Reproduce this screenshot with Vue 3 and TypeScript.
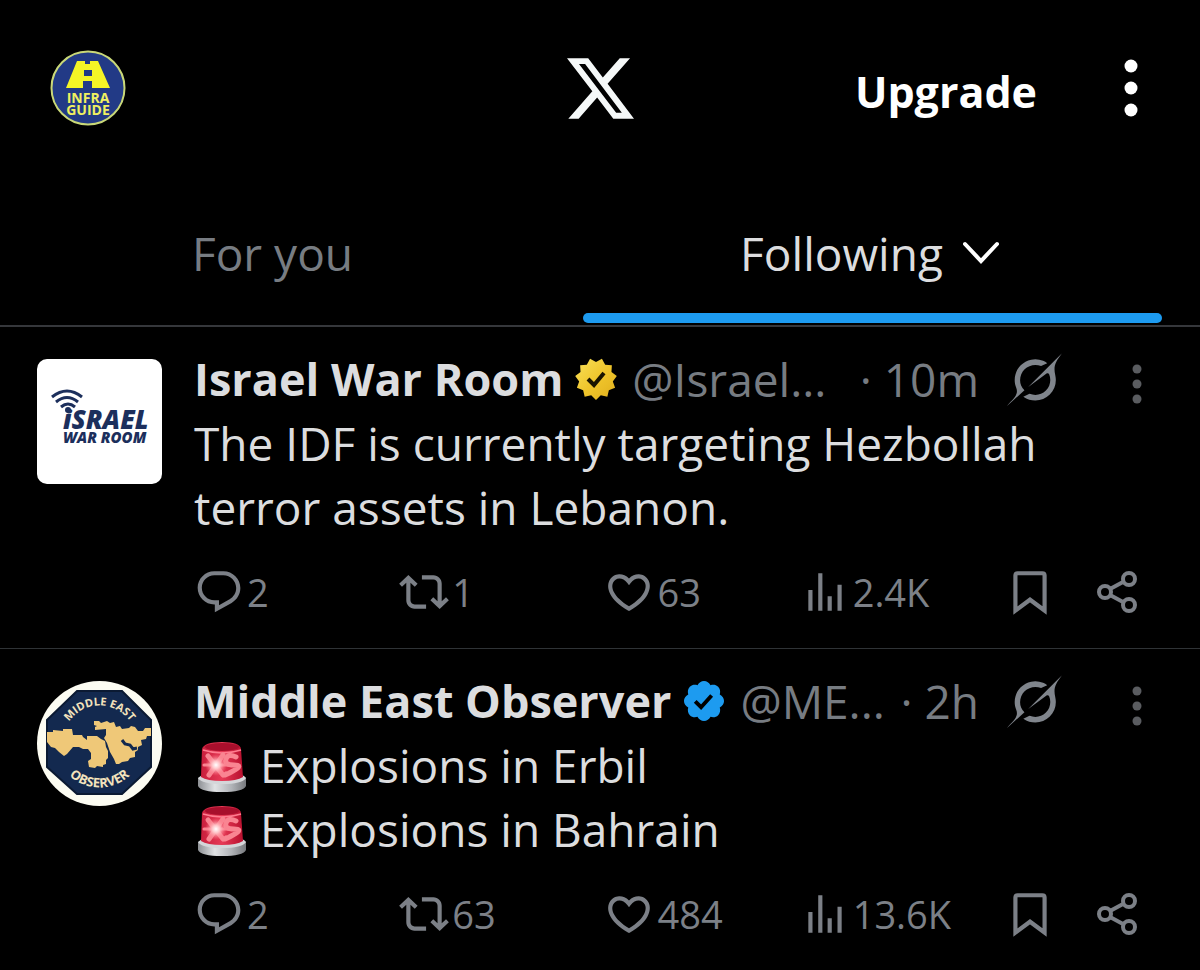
<script setup lang="ts">
import { ref } from 'vue'

interface Post {
  id: number
  name: string
  badge: 'gold' | 'blue'
  logo: 'warroom' | 'observer'
  handle: string
  time: string
  lines: { siren: boolean; text: string }[]
  replies: string
  reposts: string
  likes: string
  views: string
}

const active = ref('following')

const posts: Post[] = [
  {
    id: 1,
    name: 'Israel War Room',
    badge: 'gold',
    logo: 'warroom',
    handle: '@Israel...',
    time: '10m',
    lines: [{ siren: false, text: 'The IDF is currently targeting Hezbollah terror assets in Lebanon.' }],
    replies: '2',
    reposts: '1',
    likes: '63',
    views: '2.4K',
  },
  {
    id: 2,
    name: 'Middle East Observer',
    badge: 'blue',
    logo: 'observer',
    handle: '@ME...',
    time: '2h',
    lines: [
      { siren: true, text: 'Explosions in Erbil' },
      { siren: true, text: 'Explosions in Bahrain' },
    ],
    replies: '2',
    reposts: '63',
    likes: '484',
    views: '13.6K',
  },
]

const icons = {
  reply:
    'M1.751 10c0-4.42 3.584-8 8.005-8h4.366c4.49 0 8.129 3.64 8.129 8.13 0 2.96-1.607 5.68-4.196 7.11l-8.054 4.46v-3.69h-.067c-4.49.1-8.183-3.51-8.183-8.01zm8.005-6c-3.317 0-6.005 2.69-6.005 6 0 3.37 2.77 6.08 6.138 6.01l.351-.01h1.761v2.3l5.087-2.81c1.951-1.08 3.163-3.13 3.163-5.36 0-3.39-2.744-6.13-6.129-6.13H9.756z',
  repost:
    'M4.5 3.88l4.432 4.14-1.364 1.46L5.5 7.55V16c0 1.1.896 2 2 2H13v2H7.5c-2.209 0-4-1.79-4-4V7.55L1.432 9.48.068 8.02 4.5 3.88zM16.5 6H11V4h5.5c2.209 0 4 1.79 4 4v8.45l2.068-1.93 1.364 1.46-4.432 4.14-4.432-4.14 1.364-1.46 2.068 1.93V8c0-1.1-.896-2-2-2z',
  like: 'M16.697 5.5c-1.222-.06-2.679.51-3.89 2.16l-.805 1.09-.806-1.09C9.984 6.01 8.526 5.44 7.304 5.5c-1.243.07-2.349.78-2.91 1.91-.552 1.12-.633 2.78.479 4.82 1.074 1.97 3.257 4.27 7.129 6.61 3.87-2.34 6.052-4.64 7.126-6.61 1.111-2.04 1.03-3.7.477-4.82-.561-1.13-1.666-1.84-2.908-1.91zm4.187 7.69c-1.351 2.48-4.001 5.12-8.379 7.67l-.503.3-.504-.3c-4.379-2.55-7.029-5.19-8.382-7.67-1.36-2.5-1.41-4.86-.514-6.67.887-1.79 2.647-2.91 4.601-3.01 1.651-.09 3.368.56 4.798 2.01 1.429-1.45 3.146-2.1 4.796-2.01 1.954.1 3.714 1.22 4.601 3.01.896 1.81.846 4.17-.514 6.67z',
  views: 'M8.75 21V3h2v18h-2zM18 21V8.5h2V21h-2zM4 21V11h2v10H4zm9.25 0v-7h2v7h-2z',
  bookmark: 'M5 20.9V4.1C5 3.4 5.5 3 6.1 3h11.8c.6 0 1.1.4 1.1 1.1v16.8l-7-5.2z',
  grok: 'M9.27 15.29l7.978-5.897c.391-.29.95-.177 1.137.272.98 2.369.542 5.215-1.41 7.169-1.951 1.954-4.667 2.382-7.149 1.406l-2.711 1.257c3.889 2.661 8.611 2.003 11.562-.953 2.341-2.344 3.066-5.539 2.388-8.42l.006.007c-.983-4.232.242-5.924 2.75-9.383.06-.082.12-.164.179-.248l-3.301 3.305v-.01L9.267 15.292M7.623 16.723c-2.792-2.67-2.31-6.801.071-9.184 1.761-1.763 4.647-2.483 7.166-1.425l2.705-1.25a7.808 7.808 0 00-1.829-1A8.975 8.975 0 005.984 5.83c-2.533 2.536-3.33 6.436-1.962 9.764 1.022 2.487-.653 4.246-2.34 6.022-.599.63-1.199 1.259-1.682 1.925l7.62-6.815',
  blueBadge:
    'M22.25 12c0-1.43-.88-2.67-2.19-3.34.46-1.39.2-2.9-.81-3.91s-2.52-1.27-3.91-.81c-.66-1.31-1.91-2.19-3.34-2.19s-2.67.88-3.33 2.19c-1.4-.46-2.91-.2-3.92.81s-1.26 2.52-.8 3.91c-1.31.67-2.2 1.91-2.2 3.34s.89 2.67 2.2 3.34c-.46 1.39-.21 2.9.8 3.91s2.52 1.26 3.91.81c.67 1.31 1.91 2.19 3.34 2.19s2.68-.88 3.34-2.19c1.39.45 2.9.2 3.91-.81s1.27-2.52.81-3.91c1.31-.67 2.19-1.91 2.19-3.34z',
}

// Eleven-pointed outline of the gold badge: alternating outer and inner radii, one tip straight down.
const starPoints = Array.from({ length: 22 }, (_, i) => {
  const r = i % 2 === 0 ? 21 : 17
  const a = (i * Math.PI) / 11 + Math.PI / 2
  return `${(21 + r * Math.cos(a)).toFixed(2)},${(21 + r * Math.sin(a)).toFixed(2)}`
}).join(' ')
</script>

<template>
  <div class="app">
    <header class="top">
      <button class="profile" aria-label="Profile">
        <svg viewBox="0 0 76 76">
          <circle cx="38" cy="38" r="36.5" fill="#223a86" stroke="#c9d878" stroke-width="2" />
          <path fill-rule="evenodd" d="M27 11h8v3h5v-3h8l12 27H42v-7h-9v7H16zM34 20v6h8v-6z" fill="#f5f526" />
          <text text-anchor="middle" class="infra">
            <tspan x="38" y="53">INFRA</tspan>
            <tspan x="38" y="65">GUIDE</tspan>
          </text>
        </svg>
      </button>
      <svg class="x-logo" viewBox="1.254 2.25 21.574 19.5" role="img" aria-label="X">
        <path
          fill="#f5f8f8"
          d="M18.244 2.25h3.308l-7.227 8.26 8.502 11.24H16.17l-5.214-6.817L4.99 21.75H1.68l7.73-8.835L1.254 2.25H8.08l4.713 6.231zm-1.161 17.52h1.833L7.084 4.126H5.117z"
        />
      </svg>
      <div class="top-right">
        <button class="upgrade">Upgrade</button>
        <button class="menu" aria-label="Menu">
          <svg viewBox="0 0 16 60">
            <circle cx="8" cy="8" r="6.5" />
            <circle cx="8" cy="30" r="6.5" />
            <circle cx="8" cy="52" r="6.5" />
          </svg>
        </button>
      </div>
    </header>

    <nav class="tabs">
      <button class="tab" :class="{ active: active === 'foryou' }" @click="active = 'foryou'">
        <span class="tab-label">For you</span>
        <span class="bar"></span>
      </button>
      <button class="tab" :class="{ active: active === 'following' }" @click="active = 'following'">
        <span class="tab-label with-menu">
          Following
          <svg class="chevron" viewBox="0 0 36 24">
            <path d="M2 3l16 17L34 3" fill="none" stroke="#fff" stroke-width="4" stroke-linecap="round" />
          </svg>
        </span>
        <span class="bar"></span>
      </button>
    </nav>

    <main>
      <article v-for="p in posts" :key="p.id" class="post">
        <a href="#" class="avatar" :aria-label="p.name">
          <svg v-if="p.logo === 'warroom'" viewBox="0 0 125 125">
            <rect width="125" height="125" rx="10" fill="#fff" />
            <g fill="none" stroke="#1c2f5c" stroke-width="3">
              <path d="M15 38q15-12 30 0" />
              <path d="M19 43q11-9 22 0" />
              <path d="M24 48q7-6 14 0" />
            </g>
            <circle cx="31" cy="51" r="3" fill="#1c2f5c" />
            <text class="wr-big">
              <tspan x="26" y="70">iSRAEL</tspan>
              <tspan x="26" y="84" class="wr-small">WAR ROOM</tspan>
            </text>
          </svg>
          <svg v-else viewBox="0 0 125 125">
            <circle cx="62.5" cy="62.5" r="62.5" fill="#fcfcf2" />
            <path d="M40 10h45l29 29v47l-29 27H40L10 86V39z" fill="#13294f" stroke="#0b1a33" stroke-width="2" />
            <path
              fill="#efc878"
              d="M10 51L16 51L16 49L26 50L26 48L35 48L36 54L45 54L46 56L50 59L50 55L60 55L64 58L68 60L69 66L71 70L71 77L69 79L69 83L66 84L66 86L60 85L58 87L52 86L51 80L54 78L54 72L51 68L46 68L42 66L36 66L30 73L27 75L22 71L18 67L14 66L10 61Z"
            />
            <path
              fill="#efc878"
              d="M57 40L62 40L64 42L70 40L73 42L77 41L79 46L83 45L85 48L92 47L94 45L98 46L101 50L106 50L108 47L114 47L114 55L110 55L109 58L104 59L105 64L101 66L101 69L98 71L98 76L93 77L91 80L85 81L82 83L79 83L77 78L73 71L70 62L67 57L69 54L69 48L58 49L58 46L60 45L57 44Z"
            />
            <path d="M85 59l3 4 5 1 3 4 4-1" fill="none" stroke="#13294f" stroke-width="3" />
            <path id="arc-top" d="M25.5 61.5a37 37 0 0 1 74 0" fill="none" />
            <path id="arc-bottom" d="M17.5 61.5a45 45 0 0 0 90 0" fill="none" />
            <text class="ring"><textPath href="#arc-top" startOffset="50%" text-anchor="middle">MIDDLE EAST</textPath></text>
            <text class="ring low"><textPath href="#arc-bottom" startOffset="50%" text-anchor="middle">OBSERVER</textPath></text>
          </svg>
        </a>

        <div class="content">
          <div class="meta">
            <a href="#" class="name">{{ p.name }}</a>
            <svg v-if="p.badge === 'gold'" class="badge" viewBox="0 0 42 42" role="img" aria-label="Verified organization">
              <defs>
                <linearGradient id="gold" x1="0" y1="0" x2="1" y2="1">
                  <stop offset="0" stop-color="#f7e05a" />
                  <stop offset="0.5" stop-color="#f0c62c" />
                  <stop offset="1" stop-color="#e0ae1c" />
                </linearGradient>
              </defs>
              <polygon :points="starPoints" fill="url(#gold)" />
              <path d="M13 21l6 6 10-12" fill="none" stroke="#1a1400" stroke-width="4" />
            </svg>
            <svg v-else class="badge" viewBox="1.25 1.25 21.5 21.5" role="img" aria-label="Verified account">
              <path :d="icons.blueBadge" fill="#1d9bf0" />
              <path d="M7.5 12.2l3 3 5.4-6" fill="none" stroke="#000" stroke-width="2" />
            </svg>
            <span class="handle">{{ p.handle }}</span>
            <span class="time">· {{ p.time }}</span>
            <button class="grok" aria-label="Explain this post">
              <svg viewBox="0 0 24 24"><path :d="icons.grok" /></svg>
            </button>
            <button class="more" aria-label="More">
              <svg viewBox="0 0 10 40">
                <circle cx="5" cy="5" r="4.5" />
                <circle cx="5" cy="20" r="4.5" />
                <circle cx="5" cy="35" r="4.5" />
              </svg>
            </button>
          </div>

          <p v-for="line in p.lines" :key="line.text" class="text">
            <svg v-if="line.siren" class="siren" viewBox="0 0 48 50" role="img" aria-label="Siren">
              <defs>
                <linearGradient id="dome" x1="0" x2="1">
                  <stop offset="0" stop-color="#c81e3c" />
                  <stop offset="0.5" stop-color="#e63a56" />
                  <stop offset="1" stop-color="#b8102e" />
                </linearGradient>
                <linearGradient id="base" x1="0" x2="1">
                  <stop offset="0" stop-color="#8d9094" />
                  <stop offset="0.35" stop-color="#e0e2e4" />
                  <stop offset="0.7" stop-color="#b0b3b7" />
                  <stop offset="1" stop-color="#77797d" />
                </linearGradient>
                <radialGradient id="glow">
                  <stop offset="0" stop-color="#fff" />
                  <stop offset="0.35" stop-color="#ffc4c8" />
                  <stop offset="1" stop-color="#ff6a7c" stop-opacity="0" />
                </radialGradient>
              </defs>
              <path d="M0 36q24-9 48 0v8q-3 6-24 6T0 44z" fill="url(#base)" />
              <path d="M0 36q3-3 6-3h36q4 0 6 3-4 6-24 6T0 36z" fill="#d4d6d9" />
              <path d="M4 7q2-7 20-7t19 7l2 28q-6 4-21 4T3 35z" fill="url(#dome)" />
              <ellipse cx="24" cy="5" rx="17" ry="4" fill="#a80f2c" />
              <path d="M5 8q19 6 38 0" fill="none" stroke="#ff7d90" stroke-width="1.5" />
              <g fill="none" stroke="#f98592" stroke-width="5" stroke-linecap="round">
                <path d="M10 14l15 19M25 13L11 33" />
                <path d="M38 15q-8-4-10 2t8 6-1 6-7 3" />
                <path d="M6 23h32" stroke-width="3" />
              </g>
              <circle cx="18" cy="23" r="11" fill="url(#glow)" />
            </svg>
            {{ line.text }}
          </p>

          <div class="actions">
            <button aria-label="Reply"><svg viewBox="0 0 24 24"><path :d="icons.reply" /></svg>{{ p.replies }}</button>
            <button aria-label="Repost"><svg viewBox="0 0 24 24"><path :d="icons.repost" /></svg>{{ p.reposts }}</button>
            <button aria-label="Like"><svg viewBox="0 0 24 24"><path :d="icons.like" /></svg>{{ p.likes }}</button>
            <button aria-label="Views"><svg viewBox="0 0 24 24"><path :d="icons.views" /></svg>{{ p.views }}</button>
            <button aria-label="Bookmark">
              <svg viewBox="0 0 24 24" class="line"><path :d="icons.bookmark" /></svg>
            </button>
            <button aria-label="Share">
              <svg viewBox="0 0 42 50" class="line share">
                <circle cx="33" cy="12" r="6" />
                <circle cx="9" cy="25" r="6" />
                <circle cx="33" cy="38" r="6" />
                <path d="M14 22l13-7M14 28l13 7" />
              </svg>
            </button>
          </div>
        </div>
      </article>
    </main>
  </div>
</template>

<style>
body {
  margin: 0;
  background: #000;
}
</style>

<style scoped>
.app {
  background: #000;
  color: #dcdddf;
  font-family: 'Open Sans', 'Noto Sans', sans-serif;
  font-size: 46px;
  line-height: 64px;
}
svg {
  display: block;
  flex: none;
}
button {
  margin: 0;
  padding: 0;
  border: 0;
  background: none;
  color: inherit;
  font: inherit;
  cursor: pointer;
}
a {
  color: inherit;
  text-decoration: none;
}
.top {
  display: grid;
  grid-template-columns: 1fr auto 1fr;
  align-items: center;
  padding: 50px 50px 69px;
}
.profile {
  justify-self: start;
}
.profile svg {
  width: 76px;
  height: 76px;
}
.infra {
  font-size: 14px;
  font-weight: 700;
  fill: #f0f060;
}
.x-logo {
  width: 67px;
  height: 61px;
}
.top-right {
  display: flex;
  align-items: center;
  justify-content: flex-end;
  gap: 86px;
  padding-right: 11px;
}
.upgrade {
  padding-top: 8px;
  color: #fff;
  font-weight: 700;
  font-size: 43px;
}
.menu svg {
  width: 16px;
  height: 60px;
  fill: #fff;
}
.tabs {
  display: grid;
  grid-template-columns: 545fr 579fr;
  gap: 38px;
  padding: 0 38px 2px 0;
  border-bottom: 2px solid #35373b;
}
.tab {
  display: flex;
  flex-direction: column;
  color: #777c82;
}
.tab.active {
  color: #dcdddf;
}
.tab-label {
  display: flex;
  align-items: center;
  align-self: center;
  gap: 20px;
  padding: 26px 0 28px;
}
.with-menu {
  padding-right: 6px;
}
.chevron {
  width: 36px;
  height: 24px;
}
.bar {
  align-self: stretch;
  height: 10px;
  border-radius: 5px;
}
.tab.active .bar {
  background: #1d9bf0;
}
.post {
  display: flex;
  gap: 32px;
  padding: 20px 58px 31px 37px;
  border-bottom: 1px solid #2f3336;
}
.avatar {
  flex: none;
  padding-top: 12px;
}
.avatar svg {
  width: 125px;
  height: 125px;
}
.wr-big,
.wr-small {
  font-weight: 800;
  font-style: italic;
  fill: #1c2f5c;
}
.wr-big {
  font-size: 26px;
}
.wr-small {
  font-size: 15px;
}
.ring {
  font-size: 11px;
  font-weight: 700;
  fill: #f3e3bd;
}
.ring.low {
  font-size: 13px;
}
.content {
  flex: 1;
  min-width: 0;
}
.meta {
  display: flex;
  align-items: center;
  height: 64px;
  white-space: nowrap;
}
.name {
  font-weight: 700;
  font-size: 45px;
}
.badge {
  width: 42px;
  height: 42px;
  margin: 0 15px 0 12px;
}
.handle,
.time {
  color: #777c82;
}
.time {
  margin-left: auto;
}
.grok {
  margin: 0 70px 0 28px;
}
.grok svg {
  width: 55px;
  height: 55px;
  fill: #80858c;
}
.more {
  padding-top: 10px;
}
.more svg {
  width: 10px;
  height: 40px;
  fill: #5a5c60;
}
.text {
  margin: 0;
}
.siren {
  display: inline-block;
  width: 48px;
  height: 50px;
  margin: 0 2px 0 4px;
  vertical-align: -9px;
}
.actions {
  display: grid;
  grid-template-columns: 205fr 205fr 195fr 205fr 91fr 46px;
  margin-top: 28px;
  color: #7c8087;
  font-size: 38px;
  line-height: 50px;
}
.actions button {
  display: flex;
  align-items: center;
  gap: 3px;
}
.actions svg {
  width: 50px;
  height: 50px;
  fill: currentColor;
}
.actions .line {
  fill: none;
  stroke: currentColor;
  stroke-width: 2;
}
.actions .share {
  width: 42px;
  stroke-width: 4;
}
</style>
